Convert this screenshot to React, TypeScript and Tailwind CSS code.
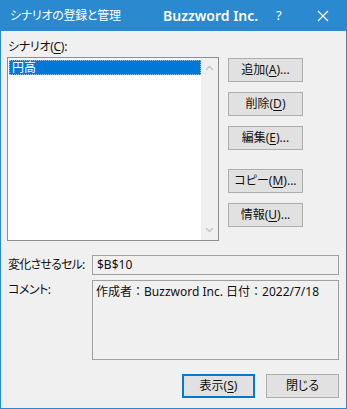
import React from "react";

const font = "[font-family:'Noto_Sans','Noto_Sans_CJK_JP',sans-serif] [font-feature-settings:'palt']";

function Btn({ children, def = false, w = "w-[75px]" }: { children: React.ReactNode; def?: boolean; w?: string }) {
  return (
    <div
      className={`${w} h-[24px] flex items-center justify-center bg-[#e1e1e1] text-[12px] text-[#111] ${
        def ? "border-2 border-[#0078d7]" : "border border-[#adadad]"
      }`}
    >
      {children}
    </div>
  );
}

const U = ({ c }: { c: string }) => <span className="underline underline-offset-2">{c}</span>;
const Colon = () => <span className="[font-feature-settings:normal]">：</span>;

export default function App() {
  return (
    <div className={`w-[347px] h-[409px] bg-[#f0f0f0] flex flex-col border-x border-b border-[#2b89cf] ${font}`}>
      <div className="h-[31px] bg-[#2b89cf] flex items-center text-white shrink-0 -mx-px">
        <span className="ml-[10px] text-[12px] tracking-[-0.3px] w-[153px]">シナリオの登録と管理</span>
        <span className="text-[14px] font-semibold w-[113px]">Buzzword Inc.</span>
        <span className="text-[13px] w-[40px]">?</span>
        <svg width="12" height="12" viewBox="0 0 12 12" className="ml-[1px]">
          <path d="M1 1L11 11M11 1L1 11" stroke="white" strokeWidth="1.2" />
        </svg>
      </div>
      <div className="flex flex-col pl-[6px] pr-[6px]">
        <div className="h-[21px] mt-[5px] flex items-center text-[12px] text-[#111] ml-[1px] tracking-[-0.3px]">
          シナリオ(<U c="C" />):
        </div>
        <div className="flex mt-[0px]">
          <div className="w-[212px] h-[184px] border border-[#8f8f8f] bg-white flex">
            <div className="flex-1 pt-[2px] pl-[1px]">
              <div className="h-[15px] bg-[#0078d7] border border-dotted border-[#9cc6ee] text-white text-[12px] leading-[13px] pl-[2px]">
                円高
              </div>
            </div>
            <div className="w-[17px] bg-[#f0f0f0] flex flex-col justify-between items-center py-[7px]">
              <svg width="9" height="6" viewBox="0 0 9 6">
                <path d="M1 5L4.5 1.5L8 5" stroke="#c4c4c4" strokeWidth="1.3" fill="none" />
              </svg>
              <svg width="9" height="6" viewBox="0 0 9 6">
                <path d="M1 1L4.5 4.5L8 1" stroke="#c4c4c4" strokeWidth="1.3" fill="none" />
              </svg>
            </div>
          </div>
          <div className="flex flex-col ml-[9px] mt-[1px]">
            <Btn>追加(<U c="A" />)...</Btn>
            <div className="h-[10px]" />
            <Btn>削除(<U c="D" />)</Btn>
            <div className="h-[10px]" />
            <Btn>編集(<U c="E" />)...</Btn>
            <div className="h-[19px]" />
            <Btn>コピー(<U c="M" />)...</Btn>
            <div className="h-[10px]" />
            <Btn>情報(<U c="U" />)...</Btn>
          </div>
        </div>
        <div className="flex mt-[14px] items-center">
          <div className="w-[85px] text-[12px] text-[#111] pl-[1px] tracking-[-0.8px]">変化させるセル:</div>
          <div className="w-[247px] h-[20px] border border-[#a0a0a0] bg-[#f0f0f0] text-[12px] text-[#111] flex items-center pl-[4px]">
            $B$10
          </div>
        </div>
        <div className="flex mt-[5px]">
          <div className="w-[85px] text-[12px] text-[#111] pl-[1px] pt-[1px] tracking-[-0.5px]">コメント:</div>
          <div className="w-[247px] h-[80px] border border-[#a0a0a0] bg-[#f0f0f0] text-[12px] text-[#111] pl-[3px] pt-[2px]">
            作成者<Colon />Buzzword Inc. 日付<Colon />2022/7/18
          </div>
        </div>
        <div className="flex justify-end mt-[14px] gap-[11px] pr-[1px]">
          <Btn def w="w-[73px]">表示(<U c="S" />)</Btn>
          <Btn w="w-[73px]">閉じる</Btn>
        </div>
      </div>
    </div>
  );
}
